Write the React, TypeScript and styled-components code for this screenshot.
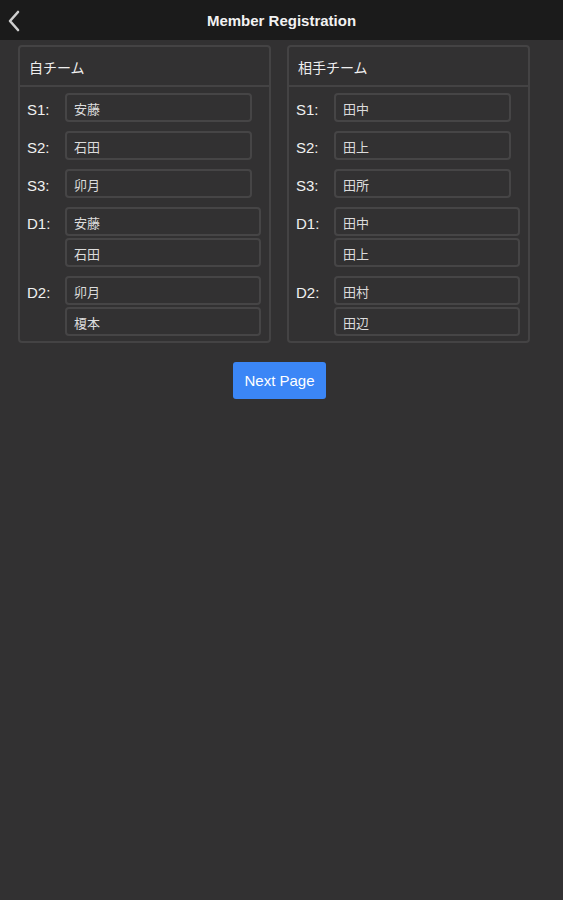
import React from "react";
import styled, { createGlobalStyle } from "styled-components";

const GlobalStyle = createGlobalStyle`
  html, body {
    margin: 0;
    padding: 0;
    background: #323132;
  }
  body {
    font-family: "Liberation Sans", "Noto Sans CJK JP", sans-serif;
    color: #eeeeee;
  }
`;

type Team = {
  title: string;
  singles: string[];
  doubles: [string, string][];
};

const teams: Team[] = [
  {
    title: "自チーム",
    singles: ["安藤", "石田", "卯月"],
    doubles: [
      ["安藤", "石田"],
      ["卯月", "榎本"],
    ],
  },
  {
    title: "相手チーム",
    singles: ["田中", "田上", "田所"],
    doubles: [
      ["田中", "田上"],
      ["田村", "田辺"],
    ],
  },
];

export default function App() {
  return (
    <Page>
      <GlobalStyle />
      <Header>
        <BackButton aria-label="back">
          <svg width="14" height="22" viewBox="0 0 14 22">
            <polyline
              points="11,2 3,11 11,20"
              fill="none"
              stroke="#cfcfcf"
              strokeWidth="2.6"
              strokeLinecap="round"
              strokeLinejoin="round"
            />
          </svg>
        </BackButton>
        <Title>Member Registration</Title>
      </Header>

      <Teams>
        {teams.map((team, i) => (
          <Panel key={team.title} $wide={i === 0}>
            <PanelHead>{team.title}</PanelHead>
            <PanelBody>
              {team.singles.map((name, n) => (
                <Row key={"s" + n}>
                  <Label>S{n + 1}:</Label>
                  <Fields $single>
                    <Field>{name}</Field>
                  </Fields>
                </Row>
              ))}
              {team.doubles.map((pair, n) => (
                <Row key={"d" + n}>
                  <Label>D{n + 1}:</Label>
                  <Fields>
                    <Field>{pair[0]}</Field>
                    <Field>{pair[1]}</Field>
                  </Fields>
                </Row>
              ))}
            </PanelBody>
          </Panel>
        ))}
      </Teams>

      <Actions>
        <NextButton>Next Page</NextButton>
      </Actions>
    </Page>
  );
}

const Page = styled.div`
  min-height: 900px;
  background: #323132;
`;

const Header = styled.header`
  position: relative;
  height: 40px;
  background: #1b1b1b;
  display: flex;
  align-items: center;
  justify-content: center;
`;

const BackButton = styled.div`
  position: absolute;
  left: 7px;
  top: 10px;
  display: flex;
`;

const Title = styled.h1`
  margin: 0;
  font-size: 15px;
  font-weight: bold;
  color: #f2f2f2;
`;

const Teams = styled.div`
  display: flex;
  gap: 16px;
  padding: 5px 0 0 18px;
`;

const Panel = styled.section<{ $wide?: boolean }>`
  width: ${(p) => (p.$wide ? "253px" : "243px")};
  box-sizing: border-box;
  border: 2px solid #444344;
  border-radius: 4px;
`;

const PanelHead = styled.div`
  height: 40px;
  box-sizing: border-box;
  padding: 10px 0 0 9px;
  font-family: "Noto Sans CJK JP", sans-serif;
  font-size: 14px;
  color: #eeeeee;
  border-bottom: 2px solid #444344;
`;

const PanelBody = styled.div`
  display: flex;
  flex-direction: column;
  gap: 9px;
  padding: 6px 8px 5px 7px;
`;

const Row = styled.div`
  display: flex;
  align-items: flex-start;
`;

const Label = styled.div`
  width: 38px;
  flex: none;
  padding-top: 8px;
  font-size: 15px;
  color: #f0f0f0;
`;

const Fields = styled.div<{ $single?: boolean }>`
  flex: 1;
  display: flex;
  flex-direction: column;
  gap: 2px;
  margin-right: ${(p) => (p.$single ? "9px" : "0")};
`;

const Field = styled.div`
  height: 29px;
  box-sizing: border-box;
  border: 2px solid #464546;
  border-radius: 4px;
  padding: 4px 0 0 7px;
  font-family: "Noto Sans CJK JP", sans-serif;
  font-size: 13px;
  color: #dcdcdc;
`;

const Actions = styled.div`
  display: flex;
  justify-content: center;
  padding: 19px 4px 0 0;
`;

const NextButton = styled.button`
  width: 93px;
  height: 37px;
  border: none;
  border-radius: 3px;
  background: #3b86f6;
  color: #ffffff;
  font-family: "Liberation Sans", sans-serif;
  font-size: 15px;
  cursor: pointer;
`;
